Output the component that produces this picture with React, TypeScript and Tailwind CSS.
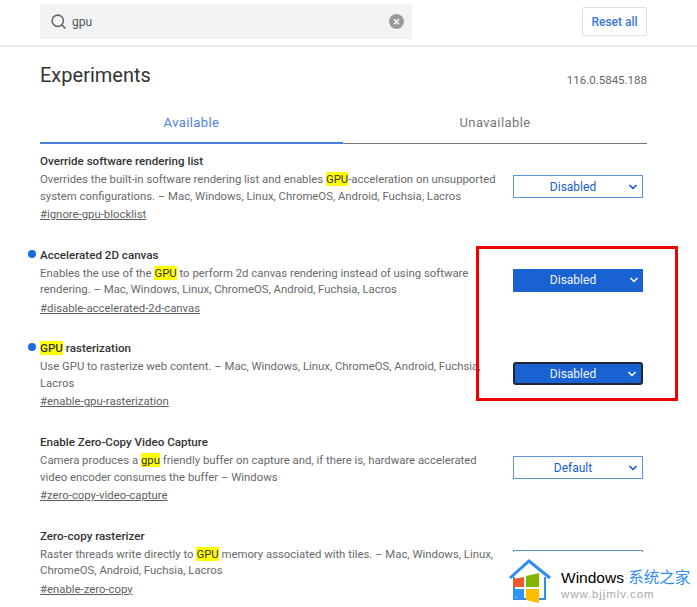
import { ChevronDown, Search } from 'lucide-react';
import type { ReactNode } from 'react';

const Mark = ({ children }: { children: ReactNode }) => (
  <span className="bg-[#ffff00] text-[#333]">{children}</span>
);

function FlagSelect({ label, variant }: { label: string; variant: 'plain' | 'active' | 'focus' }) {
  const styles = {
    plain: 'border border-[#5f93e2] bg-white text-[#1a5fc8]',
    active: 'bg-[#1a62d2] text-[#eef4ff]',
    focus: 'border-2 border-[#1d2735] rounded-[3px] bg-[#1a62d2] text-[#eef4ff]',
  }[variant];
  return (
    <div className={`relative flex h-[23px] w-[130px] shrink-0 items-center justify-center pr-[10px] text-[12px] ${styles}`}>
      {label}
      <ChevronDown className="absolute right-[3px] top-1/2 h-[12px] w-[12px] -translate-y-1/2" strokeWidth={3.5} />
    </div>
  );
}

function Experiment({
  title,
  lines,
  link,
  select,
  dot,
}: {
  title: ReactNode;
  lines: ReactNode[];
  link: string;
  select: ReactNode;
  dot?: boolean;
}) {
  return (
    <div className="relative flex h-[93.6px] items-start justify-between pr-[4px]">
      {dot && <span className="absolute left-[-12px] top-[4px] h-[8px] w-[8px] rounded-full bg-[#1a6ae0]" />}
      <div className="text-[11.35px] leading-[16.5px] text-[#6a6a6a]">
        <div className="mb-[1px] text-[11.6px] font-medium leading-[18px] text-[#333]">{title}</div>
        {lines.map((line, i) => (
          <div key={i} className="whitespace-nowrap">{line}</div>
        ))}
        <div className="mt-[2px] text-[#5f5f5f] underline">{link}</div>
      </div>
      <div className="mt-[23px]">{select}</div>
    </div>
  );
}

function Watermark() {
  return (
    <div className="absolute left-[505px] top-[552px] flex h-[55px] w-[192px] items-start bg-white pl-[2px] pt-[5px]">
      <svg width="56" height="46" viewBox="0 0 56 46" className="shrink-0">
        <path d="M3 21 L22 4 L43 21" fill="none" stroke="#2f8df0" strokeWidth="3" />
        <path d="M7 20 V42 H38 V20" fill="none" stroke="#2f8df0" strokeWidth="2" />
        <path d="M6 22 L17 20 V30 H6 Z" fill="#f0592b" />
        <path d="M19 19 L32 16 V30 H19 Z" fill="#86b404" />
        <path d="M6 32 H17 V42 L6 40 Z" fill="#2f94f5" />
        <path d="M19 32 H32 V46 L19 43 Z" fill="#ffbd00" />
      </svg>
      <div className="ml-[-2px] mt-[10px] font-['Liberation_Sans',sans-serif]">
        <div className="whitespace-nowrap text-[15.5px] leading-[18px] text-black">
          Windows <span className="font-['Noto_Sans_CJK_SC',sans-serif] text-[#2f8df0]">系统之家</span>
        </div>
        <div className="whitespace-nowrap text-[11.5px] leading-[15px] tracking-[0.9px] text-[#aaa]">www.bjjmlv.com</div>
      </div>
    </div>
  );
}

export default function App() {
  return (
    <div className="relative h-[607px] w-[697px] overflow-hidden bg-white font-['Roboto',sans-serif]">
      {/* Header */}
      <div className="flex h-[47px] items-start justify-between border-b-2 border-[#ececec] pl-[40px] pr-[50px]">
        <div className="mt-[4px] flex h-[35px] w-[372px] items-center bg-[#f1f3f4] pl-[10px] pr-[8px] text-[12px] text-[#555]">
          <Search className="h-[17px] w-[17px] text-[#666]" strokeWidth={2.2} />
          <span className="ml-[5px]">gpu</span>
          <span className="ml-auto flex h-[15px] w-[15px] items-center justify-center rounded-full bg-[#9a9a9a] text-[13px] font-bold leading-none text-[#f1f3f4]">×</span>
        </div>
        <div className="mt-[7px] flex h-[29px] w-[65px] items-center justify-center rounded-[2px] border border-[#dfe1e5] text-[12px] font-medium text-[#3a78d8]">
          Reset all
        </div>
      </div>

      <div className="pl-[40px] pr-[50px]">
        {/* Title */}
        <div className="flex items-start justify-between pt-[14px]">
          <h1 className="text-[20px] leading-[28px] text-[#333]">Experiments</h1>
          <span className="mt-[11px] text-[11.5px] text-[#666]">116.0.5845.188</span>
        </div>

        {/* Tabs */}
        <div className="mt-[21px] flex h-[34px] text-[13px] tracking-[0.4px]">
          <div className="flex w-[303px] items-start justify-center border-b-2 border-[#4a7fd8] pt-[3px] text-[#4f82dc]">Available</div>
          <div className="flex flex-1 items-start justify-center border-b border-[#777] pt-[3px] text-[#777]">Unavailable</div>
        </div>

        {/* Flags */}
        <div className="pt-[8px]">
          <Experiment
            title="Override software rendering list"
            lines={[
              <>Overrides the built-in software rendering list and enables <Mark>GPU</Mark>-acceleration on unsupported</>,
              'system configurations. – Mac, Windows, Linux, ChromeOS, Android, Fuchsia, Lacros',
            ]}
            link="#ignore-gpu-blocklist"
            select={<FlagSelect label="Disabled" variant="plain" />}
          />
          <Experiment
            dot
            title="Accelerated 2D canvas"
            lines={[
              <>Enables the use of the <Mark>GPU</Mark> to perform 2d canvas rendering instead of using software</>,
              'rendering. – Mac, Windows, Linux, ChromeOS, Android, Fuchsia, Lacros',
            ]}
            link="#disable-accelerated-2d-canvas"
            select={<FlagSelect label="Disabled" variant="active" />}
          />
          <Experiment
            dot
            title={<><Mark>GPU</Mark> rasterization</>}
            lines={['Use GPU to rasterize web content. – Mac, Windows, Linux, ChromeOS, Android, Fuchsia,', 'Lacros']}
            link="#enable-gpu-rasterization"
            select={<FlagSelect label="Disabled" variant="focus" />}
          />
          <Experiment
            title="Enable Zero-Copy Video Capture"
            lines={[
              <>Camera produces a <Mark>gpu</Mark> friendly buffer on capture and, if there is, hardware accelerated</>,
              'video encoder consumes the buffer – Windows',
            ]}
            link="#zero-copy-video-capture"
            select={<FlagSelect label="Default" variant="plain" />}
          />
          <Experiment
            title="Zero-copy rasterizer"
            lines={[
              <>Raster threads write directly to <Mark>GPU</Mark> memory associated with tiles. – Mac, Windows, Linux,</>,
              'ChromeOS, Android, Fuchsia, Lacros',
            ]}
            link="#enable-zero-copy"
            select={<FlagSelect label="Default" variant="plain" />}
          />
        </div>
      </div>

      {/* Red annotation */}
      <div className="absolute left-[476px] top-[246px] h-[155px] w-[202px] border-[3px] border-[#f00000]" />
      <Watermark />
    </div>
  );
}
